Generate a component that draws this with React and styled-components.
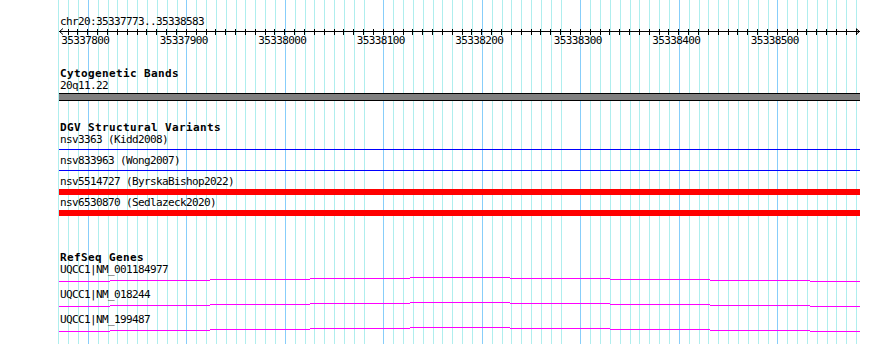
import React from "react";
import styled, { createGlobalStyle } from "styled-components";

const GlobalStyle = createGlobalStyle`
  html, body { margin: 0; padding: 0; background: #ffffff; }
  body { font-family: "DejaVu Sans Mono", "Liberation Mono", monospace; color: #000; }
`;

const START = 35337773;
const END = 35338583;
const PX_PER_BP = 0.985;
const REF_BP = 35337800;
const REF_X = 87.8; // page x of REF_BP
const PANEL_LEFT = 58;

const bpToPanel = (bp) => REF_X + (bp - REF_BP) * PX_PER_BP - PANEL_LEFT;

const Page = styled.div`
  width: 890px;
  height: 344px;
  overflow: hidden;
  background: #ffffff;
  padding-left: ${PANEL_LEFT}px;
  box-sizing: border-box;
`;

const Panel = styled.div`
  width: 803px;
  height: 344px;
  box-sizing: border-box;
  padding-left: 2px;
  display: flex;
  flex-direction: column;
  background-image:
    repeating-linear-gradient(90deg, transparent 0 29.85px, #87cefa 29.85px 30.85px, transparent 30.85px 98.5px),
    repeating-linear-gradient(90deg, transparent 0 0.3px, #afeeee 0.3px 1.3px, transparent 1.3px 9.85px);
  background-repeat: no-repeat;
  background-size: 803px 344px;
`;

const TextLine = styled.div`
  font-size: 11px;
  line-height: 12px;
  height: 12px;
  letter-spacing: -0.62px;
  white-space: pre;
  color: #000;
`;

const Header = styled(TextLine)`
  margin-top: 16px;
`;

const TrackTitle = styled(TextLine)`
  font-weight: bold;
  letter-spacing: 0.38px;
`;

const FeatureLabel = styled(TextLine)``;

const Track = styled.section`
  display: flex;
  flex-direction: column;
  margin-top: ${(p) => p.$top}px;
`;

const RulerSvg = styled.svg`
  display: block;
  margin-left: -2px;
  width: 803px;
  height: 20px;
  overflow: visible;
  font-family: "DejaVu Sans Mono", "Liberation Mono", monospace;
  font-size: 11px;
  letter-spacing: -0.62px;
`;

const BandBar = styled.div`
  margin: 1px 0 0 -1px;
  width: 801px;
  height: 8px;
  box-sizing: border-box;
  background: #808080;
  border-top: 1px solid #000;
  border-bottom: 1px solid #000;
`;

const VariantRow = styled.div`
  display: flex;
  flex-direction: column;
  height: 21px;
`;

const VariantGlyph = styled.div`
  margin: 1px 0 0 -1px;
  width: 801px;
  height: 6px;
  box-sizing: border-box;
  ${(p) =>
    p.$kind === "bar"
      ? `background: #ff0000;`
      : `border-top: 1px solid #0000ff; margin-top: 3px; height: 4px;`}
`;

const GeneRow = styled.div`
  display: flex;
  flex-direction: column;
  height: 25px;
`;

const GeneSvg = styled.svg`
  display: block;
  margin-left: -1px;
  width: 801px;
  height: 8px;
`;

function Ruler() {
  const ticks = [];
  for (let bp = 35337780; bp <= 35338580; bp += 10) ticks.push(bp);
  const labels = ticks.filter((bp) => bp % 100 === 0);
  const lineY = 3.5;
  return (
    <RulerSvg viewBox="0 0 803 20">
      <g stroke="#000" strokeWidth="1" shapeRendering="crispEdges" fill="none">
        <line x1="1" y1={lineY} x2="802" y2={lineY} />
        {ticks.map((bp) => {
          const x = Math.floor(bpToPanel(bp)) + 0.5;
          return <line key={bp} x1={x} y1="1" x2={x} y2="7" />;
        })}
      </g>
      <g stroke="#000" strokeWidth="1" fill="none">
        <polyline points={`5,0.5 1.5,${lineY} 5,6.5`} />
        <polyline points={`798,0.5 801.5,${lineY} 798,6.5`} />
      </g>
      <g fill="#000">
        {labels.map((bp) => (
          <text key={bp} x={bpToPanel(bp) - 26.5} y="15.6">
            {bp}
          </text>
        ))}
      </g>
    </RulerSvg>
  );
}

const GENE_STEPS = [
  [59, 110, 5],
  [110, 210, 4],
  [210, 310, 3],
  [310, 410, 2],
  [410, 510, 1],
  [510, 610, 2],
  [610, 710, 3],
  [710, 810, 4],
  [810, 860, 5],
];

function GeneModel() {
  return (
    <GeneSvg viewBox="0 0 801 8">
      <g stroke="#ff00ff" strokeWidth="1" shapeRendering="crispEdges">
        {GENE_STEPS.map(([a, b, y]) => (
          <line key={a} x1={a - 59} y1={y + 0.5} x2={b - 59} y2={y + 0.5} />
        ))}
      </g>
    </GeneSvg>
  );
}

const variants = [
  { name: "nsv3363 (Kidd2008)", kind: "line" },
  { name: "nsv833963 (Wong2007)", kind: "line" },
  { name: "nsv5514727 (ByrskaBishop2022)", kind: "bar" },
  { name: "nsv6530870 (Sedlazeck2020)", kind: "bar" },
];

const genes = ["UQCC1|NM_001184977", "UQCC1|NM_018244", "UQCC1|NM_199487"];

export default function App() {
  return (
    <>
      <GlobalStyle />
      <Page>
        <Panel>
          <Header>{`chr20:${START}..${END}`}</Header>
          <Ruler />
          <Track $top={20}>
            <TrackTitle>Cytogenetic Bands</TrackTitle>
            <FeatureLabel>20q11.22</FeatureLabel>
            <BandBar />
          </Track>
          <Track $top={21}>
            <TrackTitle>DGV Structural Variants</TrackTitle>
            {variants.map((v) => (
              <VariantRow key={v.name}>
                <FeatureLabel>{v.name}</FeatureLabel>
                <VariantGlyph $kind={v.kind} />
              </VariantRow>
            ))}
          </Track>
          <Track $top={34}>
            <TrackTitle>RefSeq Genes</TrackTitle>
            {genes.map((g) => (
              <GeneRow key={g}>
                <FeatureLabel>{g}</FeatureLabel>
                <GeneModel />
              </GeneRow>
            ))}
          </Track>
        </Panel>
      </Page>
    </>
  );
}
